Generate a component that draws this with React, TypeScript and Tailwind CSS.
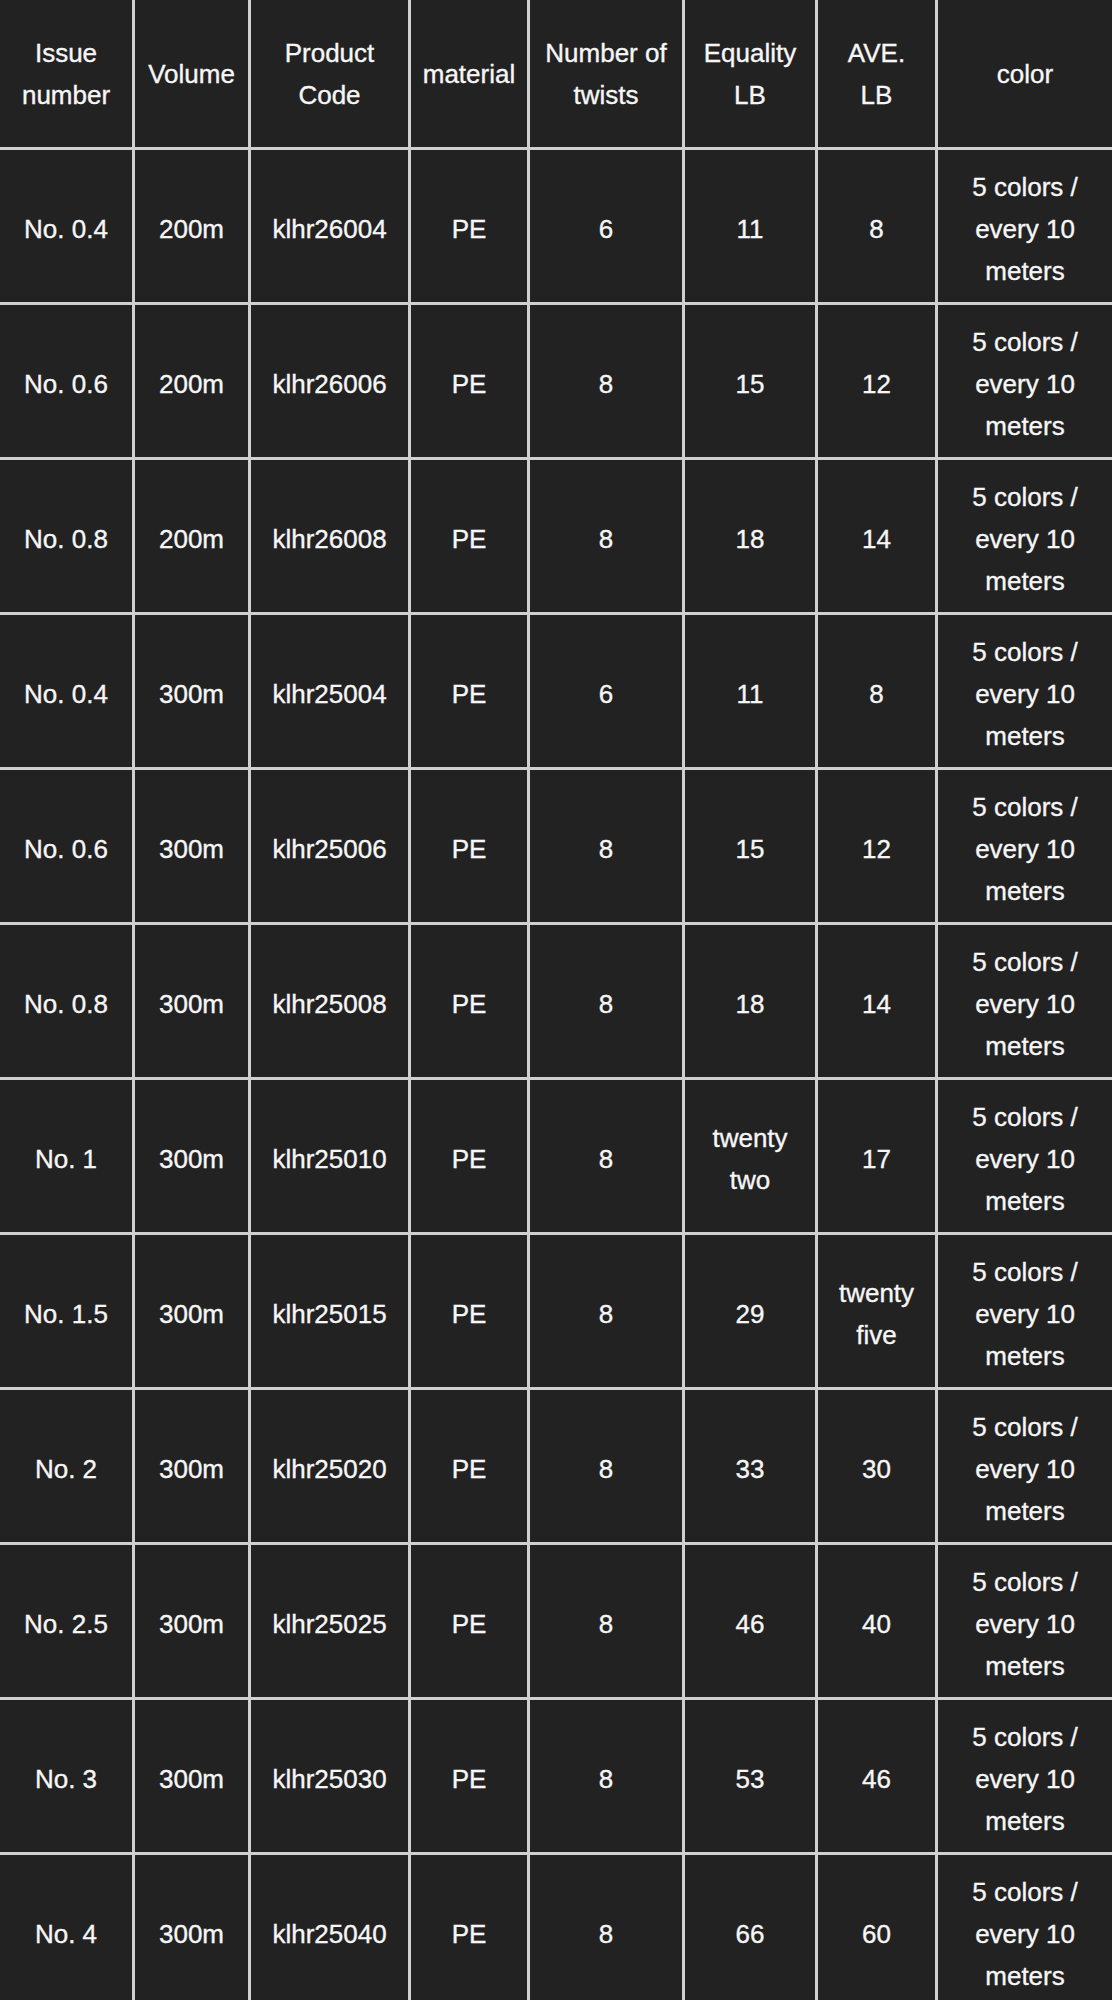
const columns = [
  { lines: ["Issue", "number"], width: "w-[135px]" },
  { lines: ["Volume"], width: "w-[116px]" },
  { lines: ["Product", "Code"], width: "w-[160px]" },
  { lines: ["material"], width: "w-[119px]" },
  { lines: ["Number of", "twists"], width: "w-[155px]" },
  { lines: ["Equality", "LB"], width: "w-[133px]" },
  { lines: ["AVE.", "LB"], width: "w-[120px]" },
  { lines: ["color"], width: "w-[174px]" },
];

const colorText = ["5 colors /", "every 10", "meters"];

const rows: string[][][] = [
  [["No. 0.4"], ["200m"], ["klhr26004"], ["PE"], ["6"], ["11"], ["8"]],
  [["No. 0.6"], ["200m"], ["klhr26006"], ["PE"], ["8"], ["15"], ["12"]],
  [["No. 0.8"], ["200m"], ["klhr26008"], ["PE"], ["8"], ["18"], ["14"]],
  [["No. 0.4"], ["300m"], ["klhr25004"], ["PE"], ["6"], ["11"], ["8"]],
  [["No. 0.6"], ["300m"], ["klhr25006"], ["PE"], ["8"], ["15"], ["12"]],
  [["No. 0.8"], ["300m"], ["klhr25008"], ["PE"], ["8"], ["18"], ["14"]],
  [["No. 1"], ["300m"], ["klhr25010"], ["PE"], ["8"], ["twenty", "two"], ["17"]],
  [["No. 1.5"], ["300m"], ["klhr25015"], ["PE"], ["8"], ["29"], ["twenty", "five"]],
  [["No. 2"], ["300m"], ["klhr25020"], ["PE"], ["8"], ["33"], ["30"]],
  [["No. 2.5"], ["300m"], ["klhr25025"], ["PE"], ["8"], ["46"], ["40"]],
  [["No. 3"], ["300m"], ["klhr25030"], ["PE"], ["8"], ["53"], ["46"]],
  [["No. 4"], ["300m"], ["klhr25040"], ["PE"], ["8"], ["66"], ["60"]],
];

function Cell({ lines, width, last, size }: { lines: string[]; width: string; last: boolean; size: string }) {
  return (
    <div
      className={`${width} ${size} shrink-0 flex flex-col items-center justify-center text-center whitespace-nowrap border-b-[3px] border-[#d0d0d0] ${
        last ? "" : "border-r-[3px]"
      }`}
    >
      {lines.map((l, i) => (
        <span key={i}>{l}</span>
      ))}
    </div>
  );
}

export default function App() {
  return (
    <div
      className="w-[1112px] bg-[#222222] text-[#f6f6f6] text-[26px] leading-[42px] overflow-hidden [-webkit-text-stroke:0.35px_#f6f6f6]"
      style={{ fontFamily: '"Liberation Sans", Arial, sans-serif' }}
    >
      {/* Header */}
      <div className="flex">
        {columns.map((c, i) => (
          <Cell key={i} lines={c.lines} width={c.width} size="h-[150px]" last={i === columns.length - 1} />
        ))}
      </div>

      {/* Rows */}
      {rows.map((row, r) => (
        <div key={r} className="flex">
          {[...row, colorText].map((lines, i) => (
            <Cell
              key={i}
              lines={lines}
              width={columns[i].width}
              size="h-[155px] pt-[5px]"
              last={i === columns.length - 1}
            />
          ))}
        </div>
      ))}
    </div>
  );
}
